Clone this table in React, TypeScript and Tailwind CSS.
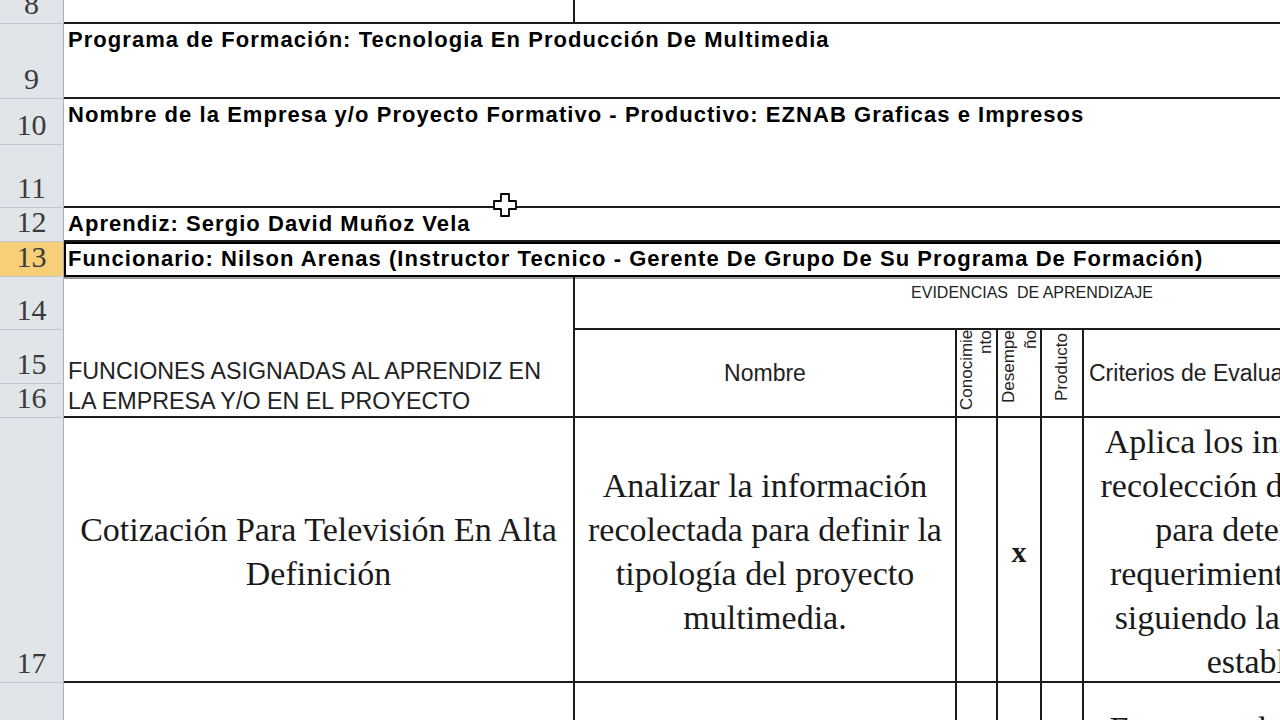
import React from "react";

const sans = "font-['Liberation_Sans',Arial,sans-serif]";
const serif = "font-['Liberation_Serif','Times_New_Roman',serif]";

const heads = [
  { n: 8, h: "h-[24px]" },
  { n: 9, h: "h-[75px]" },
  { n: 10, h: "h-[46px]" },
  { n: 11, h: "h-[63px]" },
  { n: 12, h: "h-[34px]" },
  { n: 13, h: "h-[35px]", active: true },
  { n: 14, h: "h-[53px]" },
  { n: 15, h: "h-[54px]" },
  { n: 16, h: "h-[34px]" },
  { n: 17, h: "h-[265px]" },
  { n: 18, h: "h-[80px]" },
];

const line = "border-[#1c1c1c]";

const Cursor: React.FC = () => (
  <svg className="absolute left-[492px] top-[192px]" width="26" height="26" viewBox="0 0 26 26">
    <path
      d="M9 2h8v7h7v8h-7v7H9v-7H2V9h7z"
      fill="#fff"
      stroke="#000"
      strokeWidth="1.8"
      strokeLinejoin="round"
    />
  </svg>
);

const App: React.FC = () => {
  return (
    <div className="relative w-[1280px] h-[720px] overflow-hidden bg-white text-black">
      <div className="flex">
        {/* row headers */}
        <div className="flex flex-col w-[64px] shrink-0">
          {heads.map(r => (
            <div
              key={r.n}
              className={`${r.h} ${r.active ? "bg-[#f6cf78]" : "bg-[#e1e4e9]"} border-b border-r border-b-[#c3c7ce] border-r-[#a9aeb6] flex items-end justify-center pb-[4px] ${serif} text-[30px] leading-none text-[#3a3a3a]`}
            >
              {r.n}
            </div>
          ))}
        </div>

        {/* sheet */}
        <div
          className={`grid shrink-0 grid-cols-[511px_382px_41px_44px_42px_405px] grid-rows-[24px_75px_46px_63px_34px_35px_53px_54px_34px_265px_80px] ${sans}`}
        >
          {/* row 8 */}
          <div className={`col-start-1 row-start-1 border-r-2 border-b-2 ${line}`} />
          <div className={`col-start-2 col-end-7 row-start-1 border-b-2 ${line}`} />

          {/* row 9 */}
          <div className={`col-start-1 col-end-7 row-start-2 border-b-2 ${line} pl-[4px] pt-[1px] text-[22px] leading-[30px] font-bold tracking-[1.05px] whitespace-nowrap`}>
            Programa de Formación: Tecnologia En Producción De Multimedia
          </div>

          {/* rows 10-11 */}
          <div className={`col-start-1 col-end-7 row-start-3 row-end-5 border-b-2 ${line} pl-[4px] pt-[1px] text-[22px] leading-[30px] font-bold tracking-[1.05px] whitespace-nowrap`}>
            Nombre de la Empresa y/o Proyecto Formativo - Productivo: EZNAB Graficas e Impresos
          </div>

          {/* row 12 */}
          <div className={`col-start-1 col-end-7 row-start-5 border-b-2 ${line} pl-[4px] text-[22px] leading-[32px] font-bold tracking-[1.05px] whitespace-nowrap`}>
            Aprendiz: Sergio David Muñoz Vela
          </div>

          {/* row 13 (selected) */}
          <div className="col-start-1 col-end-7 row-start-6 border-2 border-black shadow-[0_2px_0_#9b9b9b] pl-[2px] text-[22px] leading-[29px] font-bold tracking-[1.05px] whitespace-nowrap">
            Funcionario: Nilson Arenas (Instructor Tecnico - Gerente De Grupo De Su Programa De Formación)
          </div>

          {/* rows 14-16 */}
          <div className={`col-start-1 row-start-7 row-end-10 border-r-2 border-b-2 ${line} flex items-end pl-[4px] text-[23.3px] leading-[30px] text-[#222]`}>
            <div>
              FUNCIONES ASIGNADAS AL APRENDIZ EN
              <br />
              LA EMPRESA Y/O EN EL PROYECTO
            </div>
          </div>
          <div className={`col-start-2 col-end-7 row-start-7 border-b-2 ${line} pt-[6px] text-center text-[16px] leading-[20px] text-[#222]`}>
            EVIDENCIAS&nbsp; DE APRENDIZAJE
          </div>
          <div className={`col-start-2 row-start-8 row-end-10 border-r-2 border-b-2 ${line} flex items-center justify-center text-[23px] text-[#222]`}>
            Nombre
          </div>
          <div className={`col-start-3 row-start-8 row-end-10 border-r-2 border-b-2 ${line} flex justify-start overflow-hidden text-[17px] leading-[19px] text-[#222]`}>
            <div className="h-full [writing-mode:vertical-rl] rotate-180 text-end">
              Conocimie
              <br />
              nto
            </div>
          </div>
          <div className={`col-start-4 row-start-8 row-end-10 border-r-2 border-b-2 ${line} flex justify-start overflow-hidden text-[17px] leading-[22px] text-[#222]`}>
            <div className="h-full [writing-mode:vertical-rl] rotate-180 text-end">
              Desempe
              <br />
              ño
            </div>
          </div>
          <div className={`col-start-5 row-start-8 row-end-10 border-r-2 border-b-2 ${line} flex justify-center overflow-hidden text-[17px] leading-[20px] text-[#222]`}>
            <div className="h-full [writing-mode:vertical-rl] rotate-180 text-end pb-[3px]">Producto</div>
          </div>
          <div className={`col-start-6 row-start-8 row-end-10 border-b-2 ${line} flex items-center pl-[5px] text-[23px] text-[#222] whitespace-nowrap`}>
            Criterios de Evaluación
          </div>

          {/* row 17 */}
          <div className={`col-start-1 row-start-10 border-r-2 border-b-2 ${line} flex items-center justify-center pt-[4px] text-center ${serif} text-[34px] leading-[44px] text-[#1a1a1a]`}>
            <div>
              Cotización Para Televisión En Alta
              <br />
              Definición
            </div>
          </div>
          <div className={`col-start-2 row-start-10 border-r-2 border-b-2 ${line} flex items-center justify-center pt-[4px] text-center ${serif} text-[34px] leading-[44px] text-[#1a1a1a]`}>
            <div>
              Analizar la información
              <br />
              recolectada para definir la
              <br />
              tipología del proyecto
              <br />
              multimedia.
            </div>
          </div>
          <div className={`col-start-3 row-start-10 border-r-2 border-b-2 ${line}`} />
          <div className={`col-start-4 row-start-10 border-r-2 border-b-2 ${line} flex items-center justify-center pt-[4px] ${serif} text-[30px] font-bold text-[#1a1a1a]`}>
            x
          </div>
          <div className={`col-start-5 row-start-10 border-r-2 border-b-2 ${line}`} />
          <div className={`col-start-6 row-start-10 border-b-2 ${line} flex items-center justify-center pt-[4px] text-center ${serif} text-[34px] leading-[44px] text-[#1a1a1a] whitespace-nowrap`}>
            <div>
              Aplica los instrumentos de
              <br />
              recolección de información
              <br />
              para determinar los
              <br />
              requerimientos del cliente
              <br />
              siguiendo la metodología
              <br />
              establecida.
            </div>
          </div>

          {/* row 18 */}
          <div className={`col-start-1 row-start-11 border-r-2 ${line}`} />
          <div className={`col-start-2 row-start-11 border-r-2 ${line}`} />
          <div className={`col-start-3 row-start-11 border-r-2 ${line}`} />
          <div className={`col-start-4 row-start-11 border-r-2 ${line}`} />
          <div className={`col-start-5 row-start-11 border-r-2 ${line}`} />
          <div className={`col-start-6 row-start-11 pt-[24px] text-center ${serif} text-[34px] leading-[44px] text-[#1a1a1a] whitespace-nowrap`}>
            Estructura la propuesta de
          </div>
        </div>
      </div>
      <Cursor />
    </div>
  );
};

export default App;
